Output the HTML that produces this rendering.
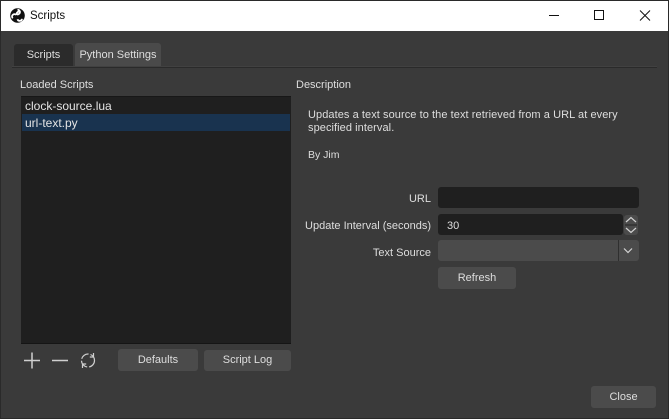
<!DOCTYPE html>
<html><head><meta charset="utf-8"><style>
html,body{margin:0;padding:0;width:669px;height:419px;overflow:hidden;background:#3a3a3a}
*{box-sizing:border-box}
body{font-family:"Liberation Sans",sans-serif;font-size:11px;color:#dedede;position:relative}
.a{position:absolute;white-space:nowrap}
.t{line-height:14px}
.b{position:absolute;background:#4b4b4b;border-radius:3px;text-align:center;color:#dedede;white-space:nowrap}
.r{text-align:right}
</style></head><body>
<div class="a" style="left:0;top:0;width:669px;height:1px;background:#2a2a2a"></div>
<div class="a" style="left:0;top:0;width:1px;height:419px;background:#2a2a2a"></div>
<div class="a" style="right:0;top:0;width:1px;height:419px;background:#2a2a2a"></div>
<div class="a" style="left:0;bottom:0;width:669px;height:1px;background:#2a2a2a"></div>
<div class="a" style="left:1px;top:1px;width:667px;height:30px;background:#fff"></div>
<svg class="a" style="left:10px;top:8px" width="15" height="15" viewBox="0 0 15 15"><circle cx="7.5" cy="7.5" r="7.3" fill="#111"/><path d="M7.500 1.800a2.300 2.300 0 1 1 -1 4.300a3 3 0 0 1 3.600-2.600M2.800 10.200a2.300 2.300 0 1 1 3.300-3.400M12 10.800a2.300 2.300 0 0 1-4.500.400" fill="none" stroke="#fff" stroke-width="1.800"/></svg>
<div class="a t" style="left:30px;top:9px;color:#111;font-size:11.5px">Scripts</div>
<svg class="a" style="left:540px;top:1px" width="120" height="30" viewBox="0 0 120 30" fill="none" stroke="#111" stroke-width="1"><path d="M9 14.500H19"/><rect x="54.500" y="9.500" width="9" height="9"/><path d="M100 9.500L110 19.500M110 9.500L100 19.500"/></svg>

<div class="a" style="left:12px;top:67px;width:645px;height:1px;background:#2a2a2a"></div>
<div class="a" style="left:12px;top:66px;width:645px;height:1px;background:#414141"></div>
<div class="b" style="left:14px;top:44px;width:59px;height:22px;background:#2b2b2b;line-height:23px;border-radius:3px 3px 0 0">Scripts</div>
<div class="b" style="left:75px;top:43px;width:86px;height:23px;background:#4a4a4a;line-height:25px;border-radius:3px 3px 0 0">Python Settings</div>

<div class="a t" style="left:20px;top:78px">Loaded Scripts</div>
<div class="a" style="left:21px;top:96px;width:270px;height:248px;background:#1f1f1f;border-top:1px solid #171717;border-bottom:1px solid #151515"></div>
<div class="a t" style="left:25px;top:99px;font-size:12px;color:#e4e4e4">clock-source.lua</div>
<div class="a" style="left:22px;top:114px;width:268px;height:17px;background:#19334f"></div>
<div class="a t" style="left:25px;top:116px;font-size:12px;color:#e4e4e4">url-text.py</div>

<svg class="a" style="left:20px;top:350px" width="80" height="20" viewBox="0 0 80 20" fill="none" stroke="#cfcfcf" stroke-width="1.500"><path d="M4 10.500H20M12 2.500V18.500M32 10.500H48"/><circle cx="68" cy="10.500" r="6.500" stroke-width="1.200" stroke-dasharray="9 2"/><path d="M73.500 3V7H69.800M62.500 18V14H66.200" stroke-width="1.200"/></svg>
<div class="b" style="left:118px;top:349px;width:80px;height:22px;line-height:23px">Defaults</div>
<div class="b" style="left:204px;top:350px;width:87px;height:21px;line-height:21px">Script Log</div>

<div class="a t" style="left:296px;top:78px">Description</div>
<div class="a" style="left:308px;top:109px;line-height:13px;font-size:11px;letter-spacing:.07px;color:#dedede">Updates a text source to the text retrieved from a URL at every<br>specified interval.</div>
<div class="a t" style="left:308px;top:148px;font-size:10.5px">By Jim</div>

<div class="a t r" style="right:238px;top:192px">URL</div>
<div class="a" style="left:438px;top:187px;width:201px;height:21px;background:#1f1f1f;border-radius:3px"></div>
<div class="a t r" style="right:238px;top:219px">Update Interval (seconds)</div>
<div class="a" style="left:438px;top:214px;width:185px;height:21px;background:#1f1f1f;border-radius:3px"></div>
<div class="a t" style="left:447px;top:219px">30</div>
<svg class="a" style="left:623px;top:214px" width="16" height="22" viewBox="0 0 16 22" fill="none" stroke="#d4d4d4" stroke-width="1.200"><rect x="1" y="1" width="14" height="20" rx="3" fill="#4b4b4b" stroke="none"/><path d="M3 8L8 3.500L13 8M3 14L8 18.500L13 14"/><path d="M2 11H14" stroke="#2a2a2a"/></svg>
<div class="a t r" style="right:238px;top:246px">Text Source</div>
<div class="a" style="left:438px;top:240px;width:201px;height:21px;background:#4b4b4b;border-radius:3px"></div>
<div class="a" style="left:618px;top:240px;width:1px;height:21px;background:#2f2f2f"></div>
<svg class="a" style="left:622px;top:247px" width="12" height="8" viewBox="0 0 12 8" fill="none" stroke="#d4d4d4" stroke-width="1.200"><path d="M2 1.500L6 5.500L10 1.500"/></svg>
<div class="b" style="left:438px;top:267px;width:78px;height:22px;line-height:22px">Refresh</div>
<div class="b" style="left:591px;top:386px;width:65px;height:22px;line-height:23px">Close</div>
</body></html>
